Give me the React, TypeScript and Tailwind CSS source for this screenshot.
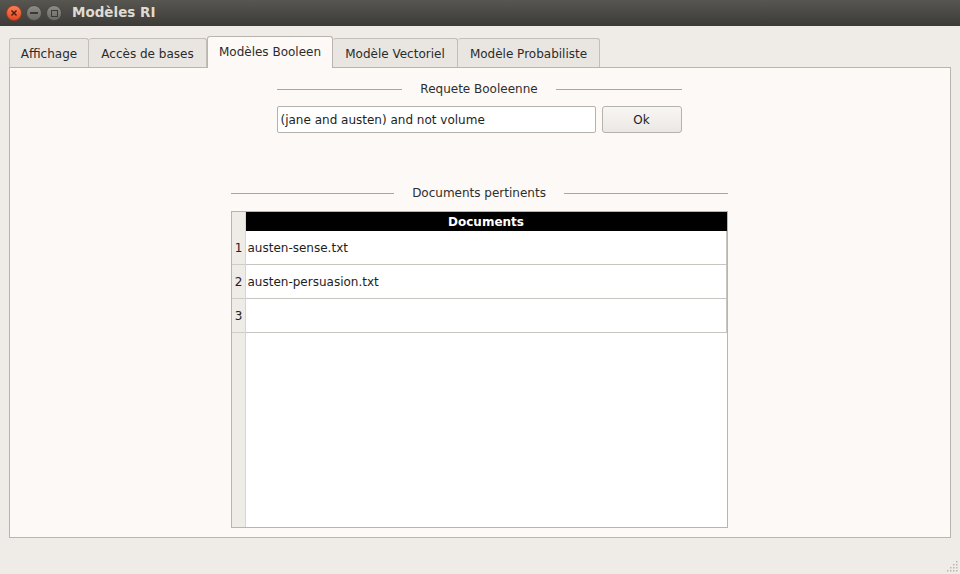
import React from "react";

const font = { fontFamily: '"DejaVu Sans", "Liberation Sans", sans-serif' };

function GroupTitle({ title, width }: { title: string; width: number }) {
  return (
    <div className="flex items-center h-[14px]" style={{ width }}>
      <div className="flex-1 h-px bg-[#a9a5a0]" />
      <div className="px-[18px] text-[12px] text-[#2e2e2e] leading-none">{title}</div>
      <div className="flex-1 h-px bg-[#a9a5a0]" />
    </div>
  );
}

function Tab({ label, selected, w }: { label: string; selected?: boolean; w: number }) {
  if (selected) {
    return (
      <div
        className="h-[32px] -mb-px relative z-10 bg-[#fcf9f6] border border-b-0 border-[#b9b4ad] rounded-t-[3px] flex items-center justify-center text-[12px] text-[#2b2b2b] pb-[2px]"
        style={{ width: w }}
      >
        {label}
      </div>
    );
  }
  return (
    <div
      className="h-[29px] bg-[#e9e6e1] border border-b-0 border-l-0 first:border-l border-[#c3beb7] rounded-t-[3px] flex items-center justify-center text-[12px] text-[#2b2b2b] pt-[2px]"
      style={{ width: w }}
    >
      {label}
    </div>
  );
}

export default function App() {
  const rows = ["austen-sense.txt", "austen-persuasion.txt", ""];
  return (
    <div className="w-[960px] h-[574px] bg-[#efebe7] flex flex-col overflow-hidden relative" style={font}>
      {/* title bar */}
      <div className="h-[26px] bg-gradient-to-b from-[#575651] to-[#3c3b37] flex items-center pl-[6px] shrink-0">
        <div className="flex items-center gap-[4px]">
          <div className="w-[16px] h-[16px] rounded-full bg-gradient-to-b from-[#f7805a] to-[#e0481f] border border-[#a8381a] flex items-center justify-center">
            <svg width="8" height="8" viewBox="0 0 8 8">
              <path d="M1.5 1.5 L6.5 6.5 M6.5 1.5 L1.5 6.5" stroke="#4a1a0c" strokeWidth="1.4" />
            </svg>
          </div>
          <div className="w-[16px] h-[16px] rounded-full bg-gradient-to-b from-[#8e8c87] to-[#6b6a65] border border-[#4a4945] flex items-center justify-center">
            <div className="w-[8px] h-[1.5px] bg-[#3a3936]" />
          </div>
          <div className="w-[16px] h-[16px] rounded-full bg-gradient-to-b from-[#8e8c87] to-[#6b6a65] border border-[#4a4945] flex items-center justify-center">
            <div className="w-[7px] h-[7px] border border-[#3a3936]" />
          </div>
        </div>
        <div className="ml-[10px] text-[13.5px] font-bold text-[#dfdbd2] leading-none">Modèles RI</div>
      </div>

      {/* content */}
      <div className="flex flex-col px-[9px] pt-[10px]">
        <div className="flex items-end h-[31px]">
          <Tab label="Affichage" w={80} />
          <Tab label="Accès de bases" w={118} />
          <Tab label="Modèles Booleen" selected w={126} />
          <Tab label="Modèle Vectoriel" w={125} />
          <Tab label="Modèle Probabiliste" w={142} />
        </div>
        <div className="h-[471px] bg-[#fcf9f6] border border-[#b9b4ad] flex flex-col items-center pr-[2px]">
          <div className="mt-[14px]">
            <GroupTitle title="Requete Booleenne" width={405} />
          </div>
          <div className="mt-[10px] flex gap-[6px] w-[405px]">
            <div className="w-[319px] h-[27px] bg-white border border-[#b5b1ac] rounded-[2px] flex items-center px-[3px] text-[12px] text-[#1e1e1e]">
              (jane and austen) and not volume
            </div>
            <div className="w-[80px] h-[27px] bg-gradient-to-b from-[#f8f6f3] to-[#ebe8e4] border border-[#b5b1ac] rounded-[3px] flex items-center justify-center text-[12px] text-[#222]">
              Ok
            </div>
          </div>
          <div className="mt-[53px]">
            <GroupTitle title="Documents pertinents" width={497} />
          </div>
          <div className="mt-[11px] w-[497px] h-[317px] border border-[#b8b4ae] bg-white flex">
            <div className="w-[13px] bg-[#efebe7] flex flex-col shrink-0">
              <div className="h-[19px]" />
              {rows.map((_, i) => (
                <div key={i} className="h-[34px] border-b border-[#cfcbc6] flex items-center justify-center text-[12px] text-[#222] pl-px">
                  {i + 1}
                </div>
              ))}
            </div>
            <div className="flex-1 flex flex-col border-l border-[#d8d4cf]">
              <div className="h-[19px] bg-black text-white text-[12px] font-bold flex items-center justify-center">
                Documents
              </div>
              {rows.map((r, i) => (
                <div key={i} className="h-[34px] border-b border-r border-[#c8c4c0] flex items-center px-[2px] text-[12px] text-[#1e1e1e]">
                  {r}
                </div>
              ))}
            </div>
          </div>
        </div>
      </div>

      {/* resize grip */}
      <svg className="absolute right-[2px] bottom-[2px]" width="12" height="12" viewBox="0 0 12 12">
        {[
          [10, 1], [7, 4], [10, 4], [4, 7], [7, 7], [10, 7], [1, 10], [4, 10], [7, 10], [10, 10],
        ].map(([x, y], i) => (
          <rect key={i} x={x} y={y} width="1.5" height="1.5" fill="#bcb7b0" />
        ))}
      </svg>
    </div>
  );
}
